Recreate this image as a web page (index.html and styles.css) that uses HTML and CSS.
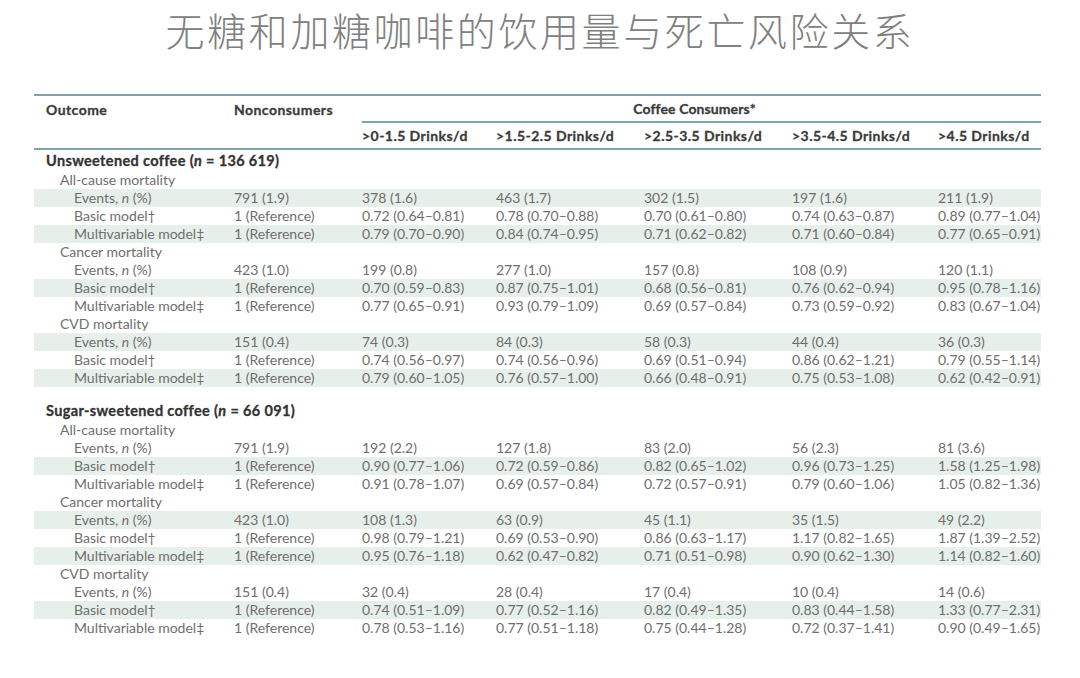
FILE: index.html
```html
<!DOCTYPE html>
<html lang="zh">
<head>
<meta charset="utf-8">
<title>无糖和加糖咖啡的饮用量与死亡风险关系</title>
<link rel="stylesheet" href="styles.css">
</head>
<body>
<h1 class="title">无糖和加糖咖啡的饮用量与死亡风险关系</h1>
<table class="tbl">
  <colgroup>
    <col class="c-outcome"><col class="c-non"><col class="c-a"><col class="c-b"><col class="c-c"><col class="c-d"><col class="c-e">
  </colgroup>
  <thead>
    <tr class="h1">
      <th class="first">Outcome</th>
      <th>Nonconsumers</th>
      <th colspan="5" class="span">Coffee Consumers*</th>
    </tr>
    <tr class="h2">
      <th class="first"></th>
      <th></th>
      <th class="rule">&gt;0-1.5 Drinks/d</th>
      <th class="rule">&gt;1.5-2.5 Drinks/d</th>
      <th class="rule">&gt;2.5-3.5 Drinks/d</th>
      <th class="rule">&gt;3.5-4.5 Drinks/d</th>
      <th class="rule">&gt;4.5 Drinks/d</th>
    </tr>
  </thead>
  <tbody>
    <tr class="sec"><td colspan="7">Unsweetened coffee (<i>n</i> = 136 619)</td></tr>
    <tr class="cat"><td colspan="7">All-cause mortality</td></tr>
    <tr class="row sh"><td>Events, <i>n</i> (%)</td><td>791 (1.9)</td><td>378 (1.6)</td><td>463 (1.7)</td><td>302 (1.5)</td><td>197 (1.6)</td><td>211 (1.9)</td></tr>
    <tr class="row"><td>Basic model†</td><td>1 (Reference)</td><td>0.72 (0.64–0.81)</td><td>0.78 (0.70–0.88)</td><td>0.70 (0.61–0.80)</td><td>0.74 (0.63–0.87)</td><td>0.89 (0.77–1.04)</td></tr>
    <tr class="row sh"><td>Multivariable model‡</td><td>1 (Reference)</td><td>0.79 (0.70–0.90)</td><td>0.84 (0.74–0.95)</td><td>0.71 (0.62–0.82)</td><td>0.71 (0.60–0.84)</td><td>0.77 (0.65–0.91)</td></tr>
    <tr class="cat"><td colspan="7">Cancer mortality</td></tr>
    <tr class="row"><td>Events, <i>n</i> (%)</td><td>423 (1.0)</td><td>199 (0.8)</td><td>277 (1.0)</td><td>157 (0.8)</td><td>108 (0.9)</td><td>120 (1.1)</td></tr>
    <tr class="row sh"><td>Basic model†</td><td>1 (Reference)</td><td>0.70 (0.59–0.83)</td><td>0.87 (0.75–1.01)</td><td>0.68 (0.56–0.81)</td><td>0.76 (0.62–0.94)</td><td>0.95 (0.78–1.16)</td></tr>
    <tr class="row"><td>Multivariable model‡</td><td>1 (Reference)</td><td>0.77 (0.65–0.91)</td><td>0.93 (0.79–1.09)</td><td>0.69 (0.57–0.84)</td><td>0.73 (0.59–0.92)</td><td>0.83 (0.67–1.04)</td></tr>
    <tr class="cat"><td colspan="7">CVD mortality</td></tr>
    <tr class="row sh"><td>Events, <i>n</i> (%)</td><td>151 (0.4)</td><td>74 (0.3)</td><td>84 (0.3)</td><td>58 (0.3)</td><td>44 (0.4)</td><td>36 (0.3)</td></tr>
    <tr class="row"><td>Basic model†</td><td>1 (Reference)</td><td>0.74 (0.56–0.97)</td><td>0.74 (0.56–0.96)</td><td>0.69 (0.51–0.94)</td><td>0.86 (0.62–1.21)</td><td>0.79 (0.55–1.14)</td></tr>
    <tr class="row sh"><td>Multivariable model‡</td><td>1 (Reference)</td><td>0.79 (0.60–1.05)</td><td>0.76 (0.57–1.00)</td><td>0.66 (0.48–0.91)</td><td>0.75 (0.53–1.08)</td><td>0.62 (0.42–0.91)</td></tr>
    <tr class="gap"><td colspan="7"></td></tr>
    <tr class="sec"><td colspan="7">Sugar-sweetened coffee (<i>n</i> = 66 091)</td></tr>
    <tr class="cat"><td colspan="7">All-cause mortality</td></tr>
    <tr class="row"><td>Events, <i>n</i> (%)</td><td>791 (1.9)</td><td>192 (2.2)</td><td>127 (1.8)</td><td>83 (2.0)</td><td>56 (2.3)</td><td>81 (3.6)</td></tr>
    <tr class="row sh"><td>Basic model†</td><td>1 (Reference)</td><td>0.90 (0.77–1.06)</td><td>0.72 (0.59–0.86)</td><td>0.82 (0.65–1.02)</td><td>0.96 (0.73–1.25)</td><td>1.58 (1.25–1.98)</td></tr>
    <tr class="row"><td>Multivariable model‡</td><td>1 (Reference)</td><td>0.91 (0.78–1.07)</td><td>0.69 (0.57–0.84)</td><td>0.72 (0.57–0.91)</td><td>0.79 (0.60–1.06)</td><td>1.05 (0.82–1.36)</td></tr>
    <tr class="cat"><td colspan="7">Cancer mortality</td></tr>
    <tr class="row sh"><td>Events, <i>n</i> (%)</td><td>423 (1.0)</td><td>108 (1.3)</td><td>63 (0.9)</td><td>45 (1.1)</td><td>35 (1.5)</td><td>49 (2.2)</td></tr>
    <tr class="row"><td>Basic model†</td><td>1 (Reference)</td><td>0.98 (0.79–1.21)</td><td>0.69 (0.53–0.90)</td><td>0.86 (0.63–1.17)</td><td>1.17 (0.82–1.65)</td><td>1.87 (1.39–2.52)</td></tr>
    <tr class="row sh"><td>Multivariable model‡</td><td>1 (Reference)</td><td>0.95 (0.76–1.18)</td><td>0.62 (0.47–0.82)</td><td>0.71 (0.51–0.98)</td><td>0.90 (0.62–1.30)</td><td>1.14 (0.82–1.60)</td></tr>
    <tr class="cat"><td colspan="7">CVD mortality</td></tr>
    <tr class="row"><td>Events, <i>n</i> (%)</td><td>151 (0.4)</td><td>32 (0.4)</td><td>28 (0.4)</td><td>17 (0.4)</td><td>10 (0.4)</td><td>14 (0.6)</td></tr>
    <tr class="row sh"><td>Basic model†</td><td>1 (Reference)</td><td>0.74 (0.51–1.09)</td><td>0.77 (0.52–1.16)</td><td>0.82 (0.49–1.35)</td><td>0.83 (0.44–1.58)</td><td>1.33 (0.77–2.31)</td></tr>
    <tr class="row"><td>Multivariable model‡</td><td>1 (Reference)</td><td>0.78 (0.53–1.16)</td><td>0.77 (0.51–1.18)</td><td>0.75 (0.44–1.28)</td><td>0.72 (0.37–1.41)</td><td>0.90 (0.49–1.65)</td></tr>
  </tbody>
</table>
</body>
</html>
```

FILE: styles.css
```css
html, body {
  margin: 0;
  padding: 0;
  background: #ffffff;
}

body {
  width: 1080px;
  height: 678px;
  overflow: hidden;
  font-family: Lato, "Open Sans", "Liberation Sans", sans-serif;
}

.title {
  margin: 0;
  height: 60px;
  line-height: 58px;
  text-align: center;
  font-family: "Noto Sans CJK SC", "Noto Sans", sans-serif;
  font-weight: 300;
  font-size: 39px;
  color: #808080;
  letter-spacing: 2.6px;
}

.tbl {
  margin: 34px 0 0 34px;
  width: 1007px;
  border-collapse: collapse;
  table-layout: fixed;
  border-top: 2px solid #7fa4a8;
  font-size: 14px;
  color: #6e6e6e;
}

.c-outcome { width: 200px; }
.c-non { width: 128px; }
.c-a { width: 134px; }
.c-b { width: 148px; }
.c-c { width: 148px; }
.c-d { width: 146px; }
.c-e { width: 103px; }

.tbl th {
  text-align: left;
  font-weight: 700;
  color: #3b3b3b;
  font-size: 14px;
  letter-spacing: 0.45px;
  -webkit-text-stroke: 0.3px #3b3b3b;
  padding: 0;
  white-space: nowrap;
}

.tbl th.first { padding-left: 12px; }

.h1 th { height: 25px; vertical-align: middle; }
.h1 th.span { text-align: center; padding-right: 14px; letter-spacing: 0.1px; }

.h2 th { height: 25px; vertical-align: middle; border-bottom: 2px solid #7fa4a8; }
.h2 th.rule { border-top: 2px solid #7fa4a8; }

.tbl td {
  padding: 0;
  height: 18px;
  line-height: 18px;
  white-space: nowrap;
}

.tbl tr.row td:first-child { padding-left: 40px; }

.tbl tr.sh td { background: #e7efeb; }

.tbl tr.sec td {
  height: 20px;
  padding-left: 12px;
  padding-top: 1px;
  font-weight: 700;
  font-size: 14.5px;
  letter-spacing: 0.35px;
  -webkit-text-stroke: 0.3px #333333;
  color: #333333;
}

.tbl tr.cat td { padding-left: 26px; }

.tbl tr.gap td { height: 13px; }
```
